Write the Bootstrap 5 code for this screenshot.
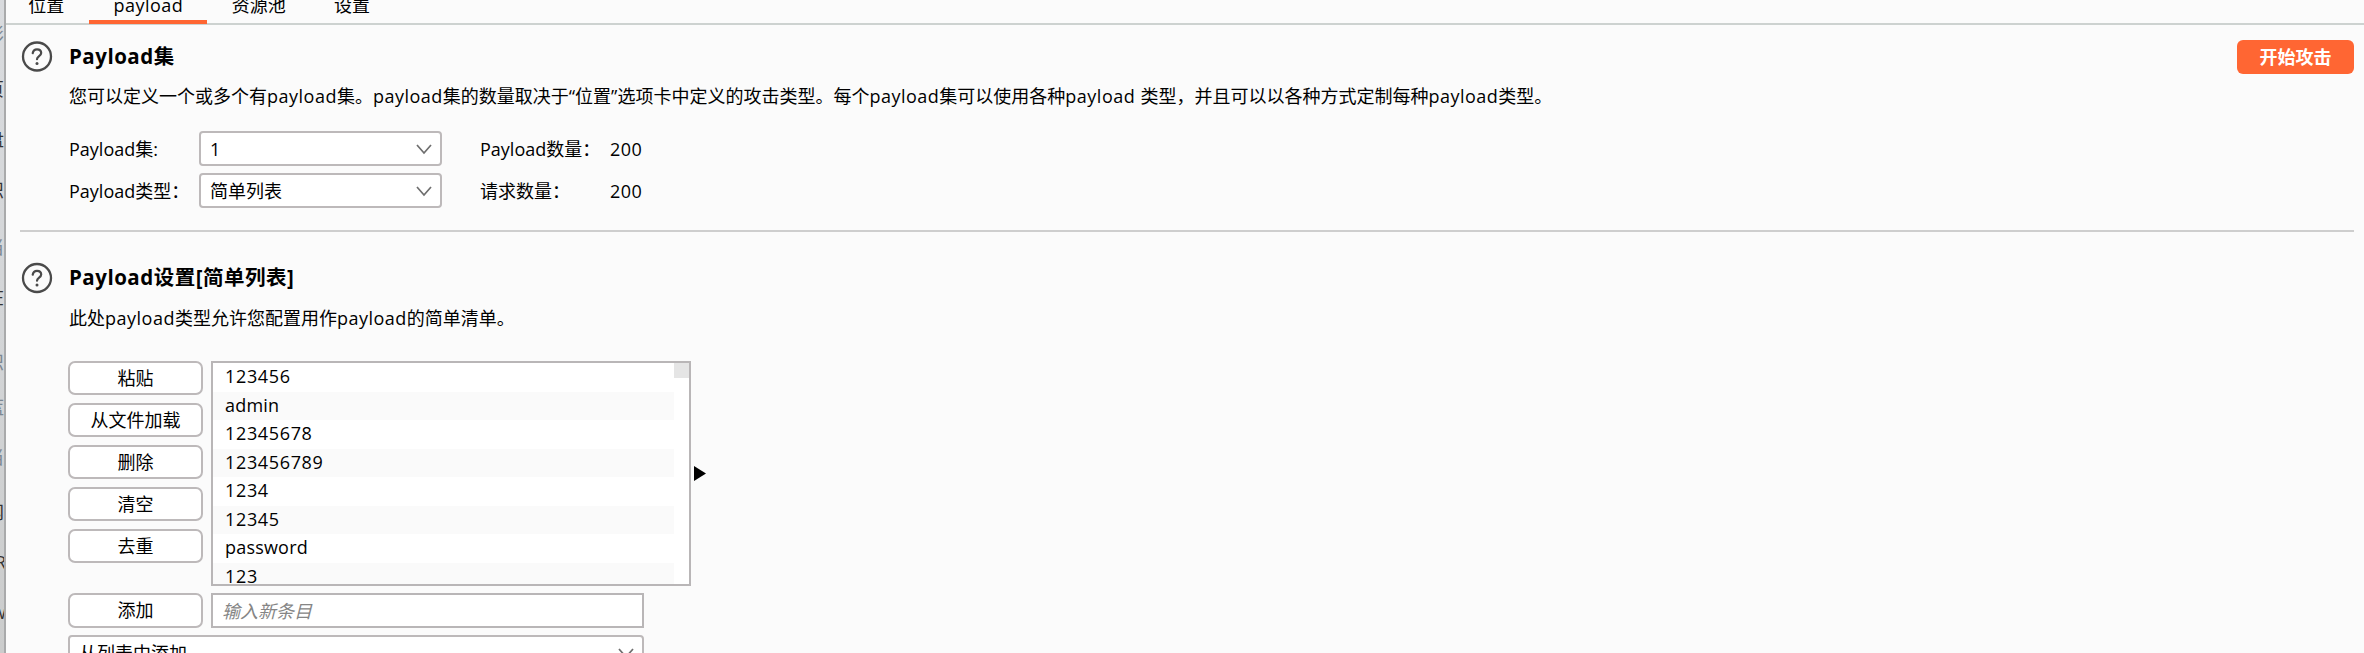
<!DOCTYPE html>
<html lang="zh-CN">
<head>
<meta charset="utf-8">
<title>Payload</title>
<link href="https://cdn.jsdelivr.net/npm/bootstrap@5.3.0/dist/css/bootstrap.min.css" rel="stylesheet">
<style>
body{height:653px;overflow:hidden;background:#fbfbfb;color:#000;font:18px/24px "Open Sans","Noto Sans CJK SC",sans-serif}
.la{letter-spacing:.5px}
.sliver{width:6px;background:linear-gradient(#d9dbde,#d3d5d7 50%,#cbcccc);border-right:2px solid #a9aaab;line-height:20px;font-size:18px;color:#333;display:grid;grid-template-columns:20px;grid-template-rows:55px 50px 51px 57px 50px 65px 45px 50px 55px 50px 50px 30px;padding-top:24px}
.sliver div{width:20px;margin-left:-14px;white-space:nowrap}
.sliver .dim{color:#7b8792}
.tabs{height:25px;border-bottom:2px solid #cdd2d0;margin-left:-2px}
.tabs .nav-link{color:#000;padding:0 24.2px;height:24px;line-height:24px;border-radius:0}
.tabs .nav-link:first-child{padding-right:25px}
.tabs .nav-link span{display:block;margin-top:-7px}
.tabs .active{border-bottom:4px solid #ff6633}
.head{height:34px}
.head h2{font-size:20.5px;line-height:32px;font-weight:700;margin-left:15px;letter-spacing:.5px;padding-bottom:2px}
.start{width:117px;height:34px;background:#ff6633;color:#fff;font-weight:700;border:0;border-radius:6px;padding:0;font-size:18px;line-height:34px}
.start:hover{background:#e95524;color:#fff}
.indent{margin-left:49px}
.grid2{display:grid;grid-template-columns:130px 243px 38px 130px 60px;row-gap:7px;margin-top:23px}
.grid2>div{line-height:37px;height:35px;white-space:nowrap}
.pick{height:35px;border:2px solid #bdb9ba;border-radius:4px;background:#fff;padding:0 8px 0 9px;line-height:32px!important}
.rule{height:2px;background:#cecece}
.acts{width:135px}
.act{height:34px;border:2px solid #bdb9ba;border-radius:7px;background:#fff;padding:0;font-size:18px;line-height:31px;color:#000;width:135px}
.items{width:480px;height:225px;border:2px solid #b9b6b7;background:#fff;overflow:hidden;position:relative}
.items ul{width:461px}
.items li{height:28.5px;line-height:27px;padding-left:12px;letter-spacing:.65px}
.items li.word{letter-spacing:.2px}
.items li:nth-child(even){background:#fafafa}
.thumb{position:absolute;right:0;top:0;width:15px;height:15px;background:#e5e5e5}
.entry{width:433px;height:35px;border:2px solid #b9b6b7;background:#fff;padding-left:9px;line-height:32px;color:#858585;font-style:italic}
</style>
<script src="https://cdn.jsdelivr.net/npm/bootstrap@5.3.0/dist/js/bootstrap.bundle.min.js"></script>
</head>
<body>
<div class="d-flex h-100">
  <div class="sliver flex-shrink-0 overflow-hidden h-100">
    <div class="dim">影</div><div>页</div><div>盘</div><div>识</div><div class="dim">当</div><div>在</div>
    <div class="dim">识</div><div class="dim">蓝</div><div class="dim">当</div><div>网</div><div class="text-end">R</div><div class="text-end">w</div>
  </div>
  <div class="flex-grow-1 overflow-hidden">
    <nav class="nav tabs flex-nowrap">
      <a class="nav-link"><span>位置</span></a><a class="nav-link active"><span class="la">payload</span></a><a class="nav-link"><span>资源池</span></a><a class="nav-link"><span>设置</span></a>
    </nav>
    <main style="padding:15px 10px 0 14px">
      <section>
        <div class="head d-flex align-items-center">
          <svg width="34" height="34" viewBox="0 0 34 34" fill="none" stroke="#4a4a4a"><circle cx="17" cy="16.5" r="14" stroke-width="2.3"/><path d="M12.7 13.2c.4-2.4 2.1-3.9 4.3-3.9 2.4 0 4.2 1.5 4.2 3.7 0 3.1-4.2 3.1-4.2 6.2" stroke-width="2.2" stroke-linecap="round"/><circle cx="17" cy="23.4" r="1.5" fill="#4a4a4a" stroke="none"/></svg>
          <h2 class="mb-0 flex-grow-1">Payload集</h2>
          <button class="start btn">开始攻击</button>
        </div>
        <div class="indent text-nowrap" style="margin-top:10px">您可以定义一个或多个有<span class="la">payload</span>集。<span class="la">payload</span>集的数量取决于“位置”选项卡中定义的攻击类型。每个<span class="la">payload</span>集可以使用各种<span class="la">payload </span>类型，并且可以以各种方式定制每种<span class="la">payload</span>类型。</div>
        <div class="indent grid2">
          <div>Payload集:</div>
          <div class="pick d-flex align-items-center justify-content-between"><span>1</span><svg width="16" height="12" fill="none" stroke="#6e6e6e" stroke-width="1.7"><path d="M1 2l7 8 7-8"/></svg></div><div></div>
          <div>Payload数量：</div><div class="la">200</div>
          <div>Payload类型：</div>
          <div class="pick d-flex align-items-center justify-content-between"><span>简单列表</span><svg width="16" height="12" fill="none" stroke="#6e6e6e" stroke-width="1.7"><path d="M1 2l7 8 7-8"/></svg></div><div></div>
          <div>请求数量：</div><div class="la">200</div>
        </div>
      </section>
      <div class="rule" style="margin-top:22px"></div>
      <section style="margin-top:29px">
        <div class="head d-flex align-items-center">
          <svg width="34" height="34" viewBox="0 0 34 34" fill="none" stroke="#4a4a4a"><circle cx="17" cy="17" r="14" stroke-width="2.3"/><path d="M12.7 13.7c.4-2.4 2.1-3.9 4.3-3.9 2.4 0 4.2 1.5 4.2 3.7 0 3.1-4.2 3.1-4.2 6.2" stroke-width="2.2" stroke-linecap="round"/><circle cx="17" cy="23.9" r="1.5" fill="#4a4a4a" stroke="none"/></svg>
          <h2 class="mb-0">Payload设置[简单列表]</h2>
        </div>
        <div class="indent" style="margin-top:11px">此处<span class="la">payload</span>类型允许您配置用作<span class="la">payload</span>的简单清单。</div>
        <div class="d-flex" style="margin:31px 0 0 48px;gap:8px">
          <div class="acts d-flex flex-column gap-2">
            <button class="act btn">粘贴</button><button class="act btn">从文件加载</button><button class="act btn">删除</button><button class="act btn">清空</button><button class="act btn">去重</button>
          </div>
          <div class="items">
            <ul class="list-unstyled mb-0"><li>123456</li><li class="word">admin</li><li>12345678</li><li>123456789</li><li>1234</li><li>12345</li><li class="word">password</li><li>123</li></ul>
            <div class="thumb"></div>
          </div>
          <svg width="13" height="15" style="margin:105px 0 0 -5px"><path d="M0 0v15l12-7.5z"/></svg>
        </div>
        <div class="d-flex" style="margin:7px 0 0 48px;gap:8px">
          <button class="act btn" style="height:35px">添加</button><div class="entry">输入新条目</div>
        </div>
        <div class="pick d-flex align-items-center justify-content-between" style="margin:7px 0 0 48px;width:576px"><span>从列表中添加</span><svg width="16" height="12" fill="none" stroke="#6e6e6e" stroke-width="1.7"><path d="M1 2l7 8 7-8"/></svg></div>
      </section>
    </main>
  </div>
</div>
</body>
</html>
